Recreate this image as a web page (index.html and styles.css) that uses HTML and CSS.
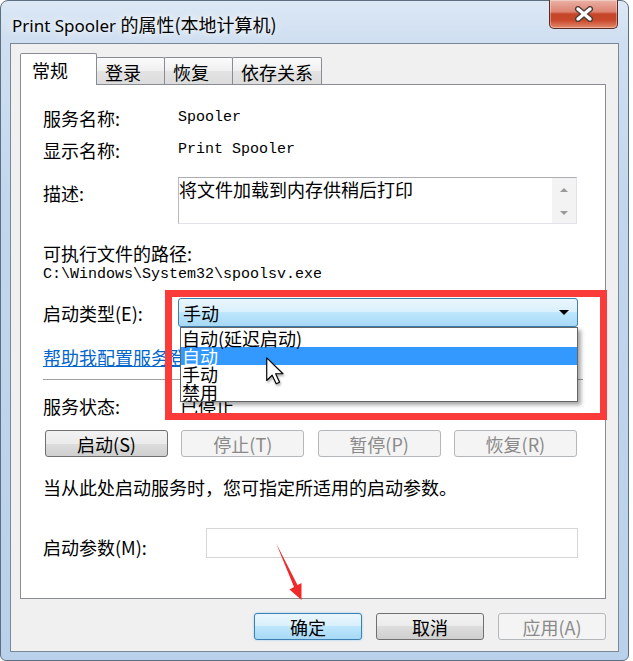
FILE: index.html
```html
<!DOCTYPE html>
<html lang="zh-CN">
<head>
    <meta charset="UTF-8">
    <meta name="viewport" content="width=device-width, initial-scale=1.0">
    <title>Print Spooler 的属性(本地计算机)</title>
    <link rel="stylesheet" href="styles.css">
</head>
<body>
    <div class="window">
        <div class="titlebar">
            <span class="title">Print Spooler <span class="title-cjk">的属性(本地计算机)</span></span>
            <button class="close-btn" aria-label="关闭">
                <svg width="20" height="16" viewBox="0 0 20 16">
                    <path d="M4 3 L16 13 M16 3 L4 13" stroke="#4a3c3a" stroke-width="6" stroke-linecap="round"/>
                    <path d="M4 3 L16 13 M16 3 L4 13" stroke="#fff" stroke-width="3.4" stroke-linecap="round"/>
                </svg>
            </button>
        </div>

        <div class="client">
            <div class="tabs">
                <div class="tab active">常规</div>
                <div class="tab">登录</div>
                <div class="tab">恢复</div>
                <div class="tab">依存关系</div>
            </div>

            <div class="panel">
                <div class="row">
                    <span class="label">服务名称:</span>
                    <span class="mono">Spooler</span>
                </div>
                <div class="row row-display">
                    <span class="label">显示名称:</span>
                    <span class="mono">Print Spooler</span>
                </div>
                <div class="row row-desc">
                    <span class="label">描述:</span>
                    <div class="desc-box">
                        <div class="desc-text">将文件加载到内存供稍后打印</div>
                        <div class="scrollbar">
                            <span class="arrow-up"></span>
                            <span class="arrow-down"></span>
                        </div>
                    </div>
                </div>
                <div class="row row-path-label">
                    <span>可执行文件的路径:</span>
                </div>
                <div class="row row-path">
                    <span class="mono">C:\Windows\System32\spoolsv.exe</span>
                </div>
                <div class="row row-type">
                    <span class="label">启动类型(E):</span>
                    <div class="combo-wrap">
                        <div class="combo">
                            <span>手动</span>
                            <span class="combo-arrow"></span>
                        </div>
                        <ul class="dropdown">
                            <li>自动(延迟启动)</li>
                            <li class="selected">自动</li>
                            <li>手动</li>
                            <li>禁用</li>
                            <!-- mouse pointer over the highlighted item -->
                            <svg class="cursor" width="19" height="28" viewBox="0 0 13 19">
                                <path d="M0.5 0.5 L0.5 16 L4.2 12.4 L7 18.2 L9.3 17.2 L6.6 11.4 L11.6 11.4 Z" fill="#fff" stroke="#000" stroke-width="0.8" stroke-linejoin="round"/>
                            </svg>
                        </ul>
                        <div class="highlight-box"></div>
                    </div>
                </div>
                <div class="row row-link">
                    <a href="#" class="link">帮助我配置服务登录选项。</a>
                </div>
                <div class="separator"></div>
                <div class="row row-status">
                    <span class="label">服务状态:</span>
                    <span class="status">已停止</span>
                </div>
                <div class="row row-buttons">
                    <button class="btn">启动(S)</button>
                    <button class="btn" disabled>停止(T)</button>
                    <button class="btn" disabled>暂停(P)</button>
                    <button class="btn" disabled>恢复(R)</button>
                </div>
                <div class="row row-hint">
                    <span>当从此处启动服务时，您可指定所适用的启动参数。</span>
                </div>
                <div class="row row-params">
                    <span class="label params-label">启动参数(M):</span>
                    <input type="text" class="param-input">
                </div>
            </div>

            <div class="dialog-buttons">
                <button class="btn btn-dialog btn-default">确定</button>
                <button class="btn btn-dialog">取消</button>
                <button class="btn btn-dialog" disabled>应用(A)</button>
            </div>
        </div>

        <svg class="annot-arrow" width="45" height="65" viewBox="265 540 45 65">
            <polygon points="276,543 297.5,585 301.5,583 301.5,600 289.5,589.5 294,587" fill="#f02a2a"/>
        </svg>
    </div>
</body>
</html>
```

FILE: styles.css
```css
* {
    margin: 0;
    padding: 0;
    box-sizing: border-box;
}

body {
    background-color: #fff;
    font-family: "Noto Sans CJK SC", sans-serif;
    color: #000;
}

.window {
    position: relative;
    width: 629px;
    height: 661px;
    border: 1px solid #5f6f82;
    border-radius: 8px 8px 6px 6px;
    background: linear-gradient(#dce8f5, #cfdff1 40px, #c2d7ee 200px, #b9d1ea);
    display: flex;
    flex-direction: column;
}

/* title bar */
.titlebar {
    height: 42px;
    display: flex;
    align-items: flex-start;
}

.title {
    padding: 12px 0 0 11px;
    font-family: "Noto Sans", sans-serif;
    font-size: 17px;
    line-height: 22px;
    text-shadow: 0 0 6px rgba(255,255,255,0.9), 0 0 12px rgba(255,255,255,0.8);
}

.title-cjk {
    font-family: "Noto Sans CJK SC", sans-serif;
    font-size: 18px;
}

.close-btn {
    margin: -1px 10px 0 auto;
    width: 69px;
    height: 29px;
    border: 1px solid #5b2c25;
    border-top: none;
    border-radius: 0 0 5px 5px;
    background: linear-gradient(#eab1a5, #de8473 42%, #c5452a 50%, #c9482b 72%, #e38a6c);
    box-shadow: inset 0 0 0 1px rgba(255,255,255,0.35);
    display: flex;
    align-items: center;
    justify-content: center;
}

/* client area */
.client {
    flex: 1;
    margin: 0 9px 8px 9px;
    border: 1px solid #7b8797;
    background-color: #f0f0f0;
    padding: 9px 12px 11px 9px;
    display: flex;
    flex-direction: column;
}

.tabs {
    display: flex;
    align-items: flex-end;
    height: 31px;
}

.tab {
    height: 27px;
    min-width: 69px;
    padding: 0 8px;
    margin-right: -1px;
    border: 1px solid #898c95;
    border-bottom: none;
    border-radius: 2px 2px 0 0;
    background: linear-gradient(#fbfbfb, #efefef 50%, #e3e3e3 51%, #dcdcdc);
    font-size: 18px;
    line-height: 28px;
}

.tab.active {
    position: relative;
    z-index: 1;
    width: 77px;
    height: 32px;
    padding-left: 11px;
    margin-bottom: -1px;
    background: #fff;
    line-height: 32px;
}

.panel {
    height: 515px;
    border: 1px solid #898c95;
    background-color: #fff;
    padding: 23px 22px 0 22px;
}

.row {
    display: flex;
    align-items: center;
    font-size: 18px;
    line-height: 20px;
}

.label {
    width: 135px;
    flex-shrink: 0;
}

.mono {
    font-family: "Liberation Mono", monospace;
    font-size: 15px;
}

.row-display { margin-top: 12px; }

.row-desc {
    margin-top: 17px;
    align-items: flex-start;
}

.row-desc .label { padding-top: 6px; }

.desc-box {
    width: 399px;
    height: 47px;
    display: flex;
    border: 1px solid #e2e3ea;
    border-top-color: #abadb3;
    border-left-color: #b8bac0;
}

.desc-text {
    flex: 1;
    padding-top: 1px;
}

.scrollbar {
    width: 24px;
    background-color: #f3f3f3;
    display: flex;
    flex-direction: column;
    justify-content: space-between;
    align-items: center;
    padding: 10px 0 8px;
}

.arrow-up, .arrow-down {
    width: 0;
    height: 0;
    border-left: 4px solid transparent;
    border-right: 4px solid transparent;
}

.arrow-up { border-bottom: 4px solid #9a9a9a; }
.arrow-down { border-top: 4px solid #9a9a9a; }

.row-path-label { margin-top: 19px; }
.row-path { margin-top: 2px; }

.row-type { margin-top: 13px; }

.combo-wrap {
    position: relative;
    width: 400px;
    height: 29px;
}

.combo {
    height: 29px;
    border: 1px solid #3c7fb1;
    border-radius: 3px;
    background: linear-gradient(#eaf6fd, #d9f0fc 50%, #bee6fd 50%, #a7d9f5);
    display: flex;
    align-items: center;
    justify-content: space-between;
    padding: 0 8px 0 4px;
}

.combo-arrow {
    width: 0;
    height: 0;
    border-left: 5px solid transparent;
    border-right: 5px solid transparent;
    border-top: 5px solid #000;
}

.dropdown {
    position: absolute;
    left: 2px;
    right: 0;
    top: 100%;
    height: 75px;
    padding-top: 1px;
    list-style: none;
    border: 1px solid #646464;
    background-color: #fff;
    box-shadow: 3px 3px 4px rgba(0,0,0,0.35);
    z-index: 2;
}

.dropdown li {
    height: 18px;
    line-height: 18px;
    padding-left: 1px;
}

.dropdown .selected {
    background-color: #3399ff;
    color: #fff;
}

.cursor {
    position: absolute;
    left: 85px;
    top: 29px;
    filter: drop-shadow(1px 2px 1px rgba(0,0,0,0.3));
}

.highlight-box {
    position: absolute;
    left: -13px;
    top: -8px;
    width: 442px;
    height: 130px;
    border: 7px solid #fb3a3a;
    z-index: 3;
    pointer-events: none;
}

.row-link { margin-top: 20px; }

.link {
    color: #0066cc;
    text-decoration: underline;
}

.separator {
    margin-top: 12px;
    height: 1px;
    background-color: #a0a0a0;
}

.row-status { margin-top: 16px; }

.status { padding-left: 2px; }

.row-buttons {
    margin-top: 14px;
    margin-left: 2px;
    gap: 13.3px;
}

.btn {
    width: 123px;
    height: 27px;
    border: 1px solid #707070;
    border-radius: 3px;
    background: linear-gradient(#f2f2f2, #ebebeb 50%, #dddddd 50%, #cfcfcf);
    font-family: "Noto Sans CJK SC", sans-serif;
    font-size: 18px;
    line-height: 24px;
    color: #000;
}

.btn:disabled {
    border-color: #b5b8ba;
    background: #f4f4f4;
    color: #8a8a8a;
}

.row-hint { margin-top: 20px; }

.row-params {
    margin-top: 31px;
    align-items: flex-start;
}

.params-label {
    width: 163px;
    padding-top: 9px;
}

.param-input {
    width: 372px;
    height: 30px;
    border: 1px solid #d6d6d6;
    background-color: #fff;
}

/* OK / Cancel / Apply */
.dialog-buttons {
    margin-top: 14px;
    display: flex;
    justify-content: flex-end;
    gap: 14px;
}

.btn-dialog { width: 108px; }

.btn-default {
    border-color: #3c7fb1;
    background: linear-gradient(#eaf6fd, #d9f0fc 50%, #bee6fd 50%, #a7d9f5);
    box-shadow: 0 0 2px #7fc4ef;
}

.annot-arrow {
    position: absolute;
    left: 264px;
    top: 539px;
    z-index: 5;
}
```
